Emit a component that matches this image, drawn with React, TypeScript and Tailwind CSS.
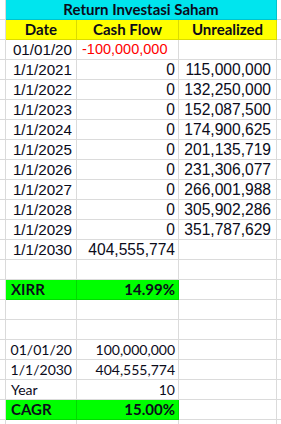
import React from "react";

type Cell = { text?: string; cls?: string };

const A = "font-['Liberation_Sans',Arial,sans-serif] text-[15.6px]";
const AD = "font-['Liberation_Sans',Arial,sans-serif] text-[15.2px]";
const C = "font-['Lato','Open_Sans',sans-serif] text-[14px]";
const CB = "font-['Lato','Open_Sans',sans-serif] text-[15px] font-bold";
const G = "bg-[#00ff00]";

const rows: [Cell, Cell, Cell][] = [
  [
    { text: "01/01/20", cls: `${AD} justify-end pr-[4px]` },
    { text: "-100,000,000", cls: `font-['Liberation_Sans',Arial,sans-serif] text-[14.5px] justify-start pl-[5px] text-[#ff0000]` },
    {},
  ],
  ...[
    ["1/1/2021", "115,000,000"],
    ["1/1/2022", "132,250,000"],
    ["1/1/2023", "152,087,500"],
    ["1/1/2024", "174,900,625"],
    ["1/1/2025", "201,135,719"],
    ["1/1/2026", "231,306,077"],
    ["1/1/2027", "266,001,988"],
    ["1/1/2028", "305,902,286"],
    ["1/1/2029", "351,787,629"],
  ].map(
    ([d, u]) =>
      [
        { text: d, cls: `${AD} justify-end pr-[4px]` },
        { text: "0", cls: `${A} justify-end pr-[3px]` },
        { text: u, cls: `${A} justify-end pr-[5px]` },
      ] as [Cell, Cell, Cell]
  ),
  [
    { text: "1/1/2030", cls: `${AD} justify-end pr-[4px]` },
    { text: "404,555,774", cls: `${A} justify-end pr-[3px]` },
    {},
  ],
  [{}, {}, {}],
  [
    { text: "XIRR", cls: `${CB} ${G} justify-start pl-[5px]` },
    { text: "14.99%", cls: `${CB} ${G} justify-end pr-[3px]` },
    {},
  ],
  [{}, {}, {}],
  [{}, {}, {}],
  [
    { text: "01/01/20", cls: `${C} justify-end pr-[4px]` },
    { text: "100,000,000", cls: `${C} justify-end pr-[3px]` },
    {},
  ],
  [
    { text: "1/1/2030", cls: `${C} justify-end pr-[4px]` },
    { text: "404,555,774", cls: `${C} justify-end pr-[3px]` },
    {},
  ],
  [
    { text: "Year", cls: `${C} justify-start pl-[5px]` },
    { text: "10", cls: `${C} justify-end pr-[3px]` },
    {},
  ],
  [
    { text: "CAGR", cls: `${CB} ${G} justify-start pl-[5px]` },
    { text: "15.00%", cls: `${CB} ${G} justify-end pr-[3px]` },
    {},
  ],
  [{}, {}, {}],
];

const widths = ["w-[71px]", "w-[102px]", "w-[98px]"];

function Row({ cells }: { cells: [Cell, Cell, Cell] }) {
  return (
    <div className="flex h-[20px]">
      <div className="w-[6px] shrink-0 border-r border-b border-[#dadada]" />
      {cells.map((c, i) => (
        <div
          key={i}
          className={`${widths[i]} shrink-0 flex items-center border-r border-b border-black/[0.14] leading-[19px] text-[#0b0b1a] whitespace-nowrap ${c.cls ?? ""}`}
        >
          {c.text}
        </div>
      ))}
      <div className="flex-1 border-b border-[#dadada]" />
    </div>
  );
}

export default function App() {
  return (
    <div className="w-[281px] h-[424px] overflow-hidden bg-white">
      <div className="flex h-[20px]">
        <div className="w-[6px] shrink-0 border-r border-b border-[#dadada]" />
        <div className="w-[271px] shrink-0 flex items-center justify-center border-r border-b border-black/[0.14] bg-[#00e5ee] font-['Lato','Open_Sans',sans-serif] font-bold text-[15px] text-[#0b0b1a]">
          Return Investasi Saham
        </div>
        <div className="flex-1 border-b border-[#dadada]" />
      </div>
      <div className="flex h-[20px]">
        <div className="w-[6px] shrink-0 border-r border-b border-[#dadada]" />
        {["Date", "Cash Flow", "Unrealized"].map((t, i) => (
          <div
            key={t}
            className={`${widths[i]} shrink-0 flex items-center justify-center border-r border-b border-black/[0.14] bg-[#ffff00] font-['Lato','Open_Sans',sans-serif] font-bold text-[15px] text-[#0b0b1a]`}
          >
            {t}
          </div>
        ))}
        <div className="flex-1 border-b border-[#dadada]" />
      </div>
      {rows.map((r, i) => (
        <Row key={i} cells={r} />
      ))}
    </div>
  );
}
